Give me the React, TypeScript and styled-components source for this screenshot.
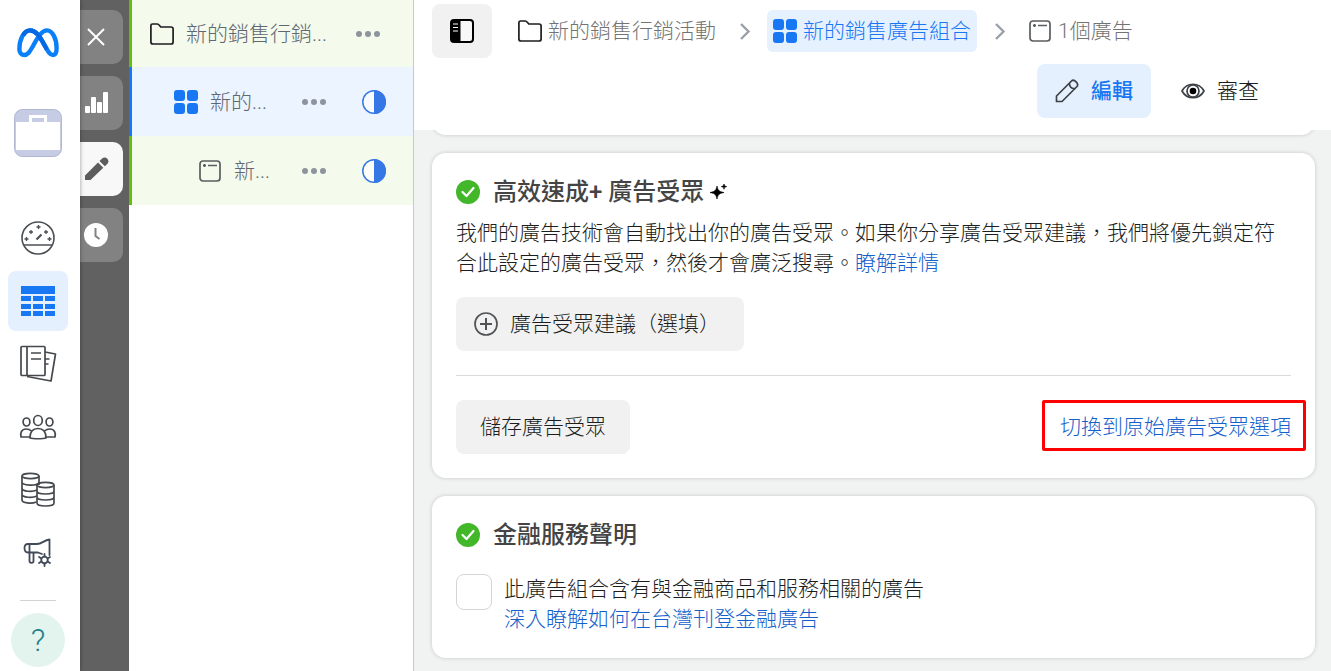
import React from "react";
import styled, { createGlobalStyle, css } from "styled-components";

const GlobalStyle = createGlobalStyle`
  *, *::before, *::after { box-sizing: border-box; }
  body {
    margin: 0;
    background: #f1f3f3;
    color: #1c1e21;
    font-family: Roboto, "Noto Sans CJK TC", sans-serif;
    font-size: 21px;
    font-weight: 300;
    line-height: 30px;
  }
  button { border: 0; padding: 0; background: none; color: inherit; font: inherit; cursor: pointer; }
  a { color: #1461cc; text-decoration: none; }
  svg { display: block; flex: none; }
  h2, p { margin: 0; }
`;

const Page = styled.div`
  display: grid;
  grid-template-columns: 80px 49px 285px minmax(0, 1fr);
  min-height: 100vh;
`;

/* Global navigation rail */
const Rail = styled.nav`
  display: flex;
  flex-direction: column;
  align-items: center;
  padding: 13px 4px 0 0;
  background: #fff;
  box-shadow: 0 0 4px rgba(0, 0, 0, 0.4);
  z-index: 2;
`;
const Brand = styled.a`
  display: grid;
  place-items: center;
  width: 60px;
  height: 60px;
`;
const Account = styled.button`
  margin: 36px 0 51px;
  width: 48px;
  height: 48px;
`;
const RailList = styled.div`
  display: flex;
  flex-direction: column;
  gap: 3px;
`;
const RailButton = styled.button<{ $active?: boolean }>`
  display: grid;
  place-items: center;
  width: 60px;
  height: 60px;
  border-radius: 8px;
  background: ${(p) => (p.$active ? "#e5f0fe" : "transparent")};
`;
const RailRule = styled.hr`
  width: 36px;
  margin: 17px 0 12px;
  border: 0;
  border-top: 1px solid #d0d3d6;
`;
const Help = styled.button`
  width: 54px;
  height: 54px;
  border-radius: 50%;
  background: #e3f4ef;
  color: #23808a;
  font-size: 32px;
`;

/* Dark tool strip */
const Strip = styled.div`
  display: flex;
  flex-direction: column;
  gap: 12px;
  padding: 10px 6px 0 0;
  background: #616161;
`;
const StripButton = styled.button<{ $active?: boolean }>`
  display: flex;
  align-items: center;
  height: 54px;
  padding-left: 4px;
  border-radius: 0 10px 10px 0;
  background: ${(p) => (p.$active ? "#f8f8f8" : "#828282")};
  color: ${(p) => (p.$active ? "#5c5c5c" : "#fff")};
`;

/* Campaign tree */
const Tree = styled.aside`
  background: #fff;
  border-right: 1px solid #c6c9cd;
`;
const TreeRow = styled.div<{ $level: number; $active?: boolean }>`
  display: flex;
  align-items: center;
  height: ${(p) => (p.$level === 0 ? 67 : 69)}px;
  padding: 0 ${(p) => (p.$level === 0 ? 33 : 27)}px 0 ${(p) => 18 + p.$level * 24}px;
  border-left: 3px solid ${(p) => (p.$active ? "#1877f2" : "#63be09")};
  background: ${(p) => (p.$active ? "#ebf4ff" : "#f4faec")};
  color: #606770;
`;
const TreeName = styled.span`
  flex: 1;
  margin-left: 12px;
  white-space: nowrap;
`;
const Status = styled.span`
  margin-left: 36px;
`;

/* Editor */
const Main = styled.main`
  display: flex;
  flex-direction: column;
`;
const Header = styled.header`
  padding: 4px 18px 12px;
  background: #fff;
  z-index: 1;
`;
const HeaderRow = styled.div`
  display: flex;
  align-items: center;
`;
const PanelToggle = styled.button`
  display: grid;
  place-items: center;
  width: 60px;
  height: 54px;
  margin-right: 20px;
  border-radius: 8px;
  background: #f1f1f1;
`;
const Crumbs = styled.nav`
  display: flex;
  align-items: center;
  gap: 10px;
`;
const Crumb = styled.a<{ $active?: boolean }>`
  display: flex;
  align-items: center;
  gap: 6px;
  padding: 6px;
  border-radius: 6px;
  white-space: nowrap;
  color: #737373;
  ${(p) => p.$active && css`
    background: #e5f1ff;
    color: #1877f2;
  `}
`;
const Modes = styled.div`
  display: flex;
  justify-content: flex-end;
  gap: 12px;
  padding: 6px 36px 0 0;
`;
const Mode = styled.button<{ $active?: boolean }>`
  display: flex;
  align-items: center;
  gap: 12px;
  height: 54px;
  padding: 0 18px;
  border-radius: 8px;
  ${(p) => p.$active && css`
    background: #e5f0fe;
    color: #1877f2;
    font-weight: 500;
  `}
`;
const Cards = styled.div`
  display: flex;
  flex-direction: column;
  gap: 18px;
  padding: 0 16px 12px 18px;
`;
const Card = styled.section`
  padding: 23px 24px 24px;
  border-radius: 14px;
  background: #fff;
  box-shadow: 0 0 4px rgba(0, 0, 0, 0.18);
`;
const ScrolledCard = styled(Card)`
  margin-top: -42px;
`;
const CardTitle = styled.h2`
  display: flex;
  align-items: center;
  gap: 13px;
  color: #444;
  font-size: 24px;
  font-weight: 500;
  line-height: 32px;
`;
const TitleText = styled.span`
  display: flex;
  align-items: center;
  gap: 6px;
`;
const Description = styled.p`
  margin: 10px 0 19px;
`;
const GreyButton = styled.button`
  display: inline-flex;
  align-items: center;
  gap: 12px;
  height: 54px;
  padding: 0 24px;
  border-radius: 8px;
  background: #f1f1f1;
`;
const SuggestButton = styled(GreyButton)`
  padding-left: 18px;
`;
const CardFooter = styled.div`
  display: flex;
  align-items: center;
  justify-content: space-between;
  margin-top: 24px;
  padding-top: 24px;
  border-top: 1px solid #d9dadc;
`;
const SwitchLink = styled.button`
  position: relative;
  color: #1461cc;
  &::after {
    content: "";
    position: absolute;
    inset: -12px -15px -9px -18px;
    border: 3px solid #f00;
    border-radius: 2px;
  }
`;
const CheckRow = styled.div`
  display: flex;
  gap: 12px;
  margin-top: 23px;
`;
const CheckText = styled.div`
  display: flex;
  flex-direction: column;
  align-items: flex-start;
`;
const Checkbox = styled.input`
  appearance: none;
  flex: none;
  width: 36px;
  height: 36px;
  margin: 0;
  border: 1px solid #d3d5d8;
  border-radius: 8px;
  background: #fff;
`;

const MetaLogo = () => (
  <svg width="42" height="30" viewBox="0 0 42 30" fill="none" strokeWidth="4.4">
    <path stroke="#0a80f8" d="M2.4 21C2.4 12 6.5 2.4 13 2.4C20 2.4 24 11 28 18C31 23.5 33 27 36 27C38.5 27 39.6 24.5 39.6 20C39.6 11 35.5 2.4 30 2.4C25 2.4 21.500 8 16 18C12.500 24 11 27 7 27C4 27 2.400 24.500 2.400 21Z" />
    <path stroke="#0567e4" d="M6 7.500C8 4 10.500 2.400 13 2.400C20 2.400 24 11 28 18C28.700 19.300 29.400 20.500 30 21.500" />
  </svg>
);
const AccountIcon = () => (
  <svg width="48" height="48" viewBox="0 0 48 48">
    <rect x=".5" y=".5" width="47" height="47" rx="8" fill="#c5cce4" stroke="#b0b7d3" />
    <path d="M15 13V6h18v7h-3V9H18v4z" fill="#fff" />
    <rect x="2" y="13" width="44" height="28" fill="#fff" />
  </svg>
);
const GaugeIcon = () => (
  <svg width="36" height="36" viewBox="0 0 36 36" fill="none" stroke="#4b4f54" strokeWidth="1.6">
    <circle cx="18" cy="18" r="16" />
    <path d="M4 25h28" strokeWidth="1.500" />
    <path d="M16.500 19.500L21.500 14.500" strokeWidth="2.200" />
    <path d="M18.500 5v4M16.500 7h4M11 10v4M9 12h4M26 10v4M24 12h4M6.500 17v4M4.500 19h4M29.500 17v4M27.500 19h4" strokeWidth="1.300" />
  </svg>
);
const TableIcon = () => (
  <svg width="34" height="32" viewBox="0 0 34 32" fill="#1877f2">
    <rect width="34" height="8" y="1" />
    {[11, 19, 26].map((y) => [0, 12, 24].map((x) => <rect key={`${x}-${y}`} x={x} y={y} width="10" height="5" />))}
  </svg>
);
const PagesIcon = () => (
  <svg width="38" height="38" viewBox="0 0 38 38" fill="none" stroke="#45494e" strokeWidth="1.700" strokeLinejoin="round">
    <rect x="2" y="1.500" width="24" height="29" rx="1" />
    <path d="M8 1.500v29M12 8h10M12 14h10M26 7l10.500 2-4.500 27-24-4.500M26 14h4.500M26 19h3.500" />
  </svg>
);
const PeopleIcon = () => (
  <svg width="38" height="26" viewBox="0 0 38 26" fill="none" stroke="#45494e" strokeWidth="1.700" strokeLinejoin="round">
    <ellipse cx="19" cy="6.500" rx="4.300" ry="5" />
    <ellipse cx="7.500" cy="8" rx="3.400" ry="4" />
    <ellipse cx="30.500" cy="8" rx="3.400" ry="4" />
    <path d="M11 24c0-6 2-9.500 8-9.500s8 3.500 8 9.500c-3 1-13 1-16 0zM10.500 23H2c-1-4 .5-8 5-8 2.500 0 4 .5 5.500 2M27.500 23H36c1-4-.5-8-5-8-2.500 0-4 .5-5.500 2" />
  </svg>
);
const CoinsIcon = () => (
  <svg width="36" height="36" viewBox="0 0 36 36" fill="none" stroke="#45494e" strokeWidth="1.700">
    <ellipse cx="10.500" cy="4" rx="8.500" ry="2.600" />
    <path d="M2 4v24c0 3 10 4 14 2M19 4v9M2 10c0 4 15 4 17 1M2 16c0 4 11 4 15 2M2 22c0 4 11 4 15 2" />
    <ellipse cx="25.500" cy="13" rx="8.500" ry="2.600" />
    <path d="M17 13v18c0 4 17 4 17 0V13M17 19c0 4 17 4 17 0M17 25c0 4 17 4 17 0" />
  </svg>
);
const MegaphoneIcon = () => (
  <svg width="30" height="30" viewBox="0 0 30 30" fill="none" stroke="#414a58" strokeWidth="1.800" strokeLinejoin="round" strokeLinecap="round">
    <path d="M6.500 6H5C2.500 6 1.500 7.500 1.500 10s1 4.500 3.500 4.500h1.500zM6.500 6H14c5 0 7-4 12.500-4.500V17M6.500 14.500H15l4 1.500M6.500 14.500V23c0 2.500 4 2.500 4 0v-8.500" />
    <circle cx="21.500" cy="22" r="3.300" />
    <path d="M21.500 16v2.500M21.500 25.500V28M16 19l2.500 1.500M24.500 23.500L27 25M27 19l-2.500 1.500M18.500 23.500L16 25" />
  </svg>
);
const CloseIcon = () => (
  <svg width="24" height="24" viewBox="0 0 24 24" stroke="currentColor" strokeWidth="2">
    <path d="M4 4l16 16M20 4L4 20" />
  </svg>
);
const BarsIcon = () => (
  <svg width="26" height="26" viewBox="0 0 26 26" fill="currentColor">
    <rect x="1" y="16" width="5" height="7" rx="1" />
    <rect x="7" y="7" width="5" height="16" rx="1" />
    <rect x="13" y="12" width="5" height="11" rx="1" />
    <rect x="19" y="2" width="5" height="21" rx="1" />
  </svg>
);
const PencilSolid = () => (
  <svg width="26" height="26" viewBox="0 0 26 26" fill="currentColor">
    <path d="M1 24v-4.500L14 6.500l5.300 5.300L6.500 24zM15.500 5l2.600-2.500c3.500-3.200 8.500 1.800 5.400 5.200L20.800 10.300z" />
  </svg>
);
const ClockIcon = () => (
  <svg width="24" height="24" viewBox="0 0 24 24">
    <circle cx="12" cy="12" r="12" fill="#fff" />
    <path d="M11.500 5v8l4 3" fill="none" stroke="#828282" strokeWidth="2" />
  </svg>
);
const FolderIcon = () => (
  <svg width="24" height="24" viewBox="0 0 24 24" fill="none" stroke="#1c1e21" strokeWidth="1.700" strokeLinejoin="round">
    <path d="M.9 3.500C.9 2.500 1.500 2 2.500 2h4.800c1 0 1.300.3 2 1.200L10.800 5H21c1.500 0 2.100.7 2.100 2v13c0 1.500-.6 2-2 2H3c-1.500 0-2.100-.6-2.100-2z" />
  </svg>
);
const SetIcon = () => (
  <svg width="24" height="24" viewBox="0 0 24 24" fill="#1877f2">
    {[0, 13].map((y) => [0, 13].map((x) => <rect key={`${x}-${y}`} x={x} y={y} width="11" height="11" rx="3" />))}
  </svg>
);
const AdIcon = () => (
  <svg width="24" height="24" viewBox="0 0 24 24" fill="none" stroke="#5a5d5f" strokeWidth="1.700">
    <rect x="2" y="2" width="20" height="20" rx="3" />
    <path d="M5 6.500h3M6.500 5v3M10 6.500h9" />
  </svg>
);
const DotsIcon = () => (
  <svg width="24" height="8" viewBox="0 0 24 8" fill="#8d949e">
    {[3, 12, 21].map((x) => <circle key={x} cx={x} cy="4" r="3" />)}
  </svg>
);
const HalfIcon = () => (
  <svg width="24" height="24" viewBox="0 0 24 24">
    <circle cx="12" cy="12" r="11.200" fill="#fff" fillOpacity=".6" stroke="#3578e5" strokeWidth="1.500" />
    <path d="M12 0a12 12 0 0 1 0 24z" fill="#3578e5" />
  </svg>
);
const PanelIcon = () => (
  <svg width="24" height="24" viewBox="0 0 24 24">
    <rect x="1" y="1" width="22" height="22" rx="3" fill="#f8f8f8" stroke="#000" strokeWidth="2" />
    <path d="M3 1h7.500v22H3a2 2 0 0 1-2-2V3a2 2 0 0 1 2-2z" />
    <path d="M3 5h5M3 8.500h5M3 12h5" stroke="#fff" strokeWidth="1.200" />
  </svg>
);
const ChevronIcon = () => (
  <svg width="25" height="24" viewBox="0 0 25 24" fill="none" stroke="#9aa0a9" strokeWidth="2.400">
    <path d="M9 5l7.500 7.500L9 20" />
  </svg>
);
const PencilOutline = () => (
  <svg width="24" height="24" viewBox="0 0 24 24" fill="none" stroke="#3d4248" strokeWidth="1.700" strokeLinejoin="round">
    <path d="M1.500 22.500v-5.500L16.500 2c2.500-2.500 8 3 5.500 5.500L7 22.500zM14.500 4.500c0 3.500 2 5.200 5 5" />
  </svg>
);
const EyeIcon = () => (
  <svg width="24" height="24" viewBox="1 0 24 24" fill="none" stroke="#3d4248" strokeWidth="1.700">
    <path d="M2 12C7 3 19 3 24 12C19 21 7 21 2 12z" />
    <circle cx="13" cy="12" r="6" />
    <circle cx="13" cy="12" r="3.300" fill="#000" stroke="none" />
  </svg>
);
const CheckIcon = () => (
  <svg width="24" height="24" viewBox="0 0 24 24" fill="none">
    <circle cx="12" cy="12" r="12" fill="#42b72a" />
    <path d="M6.500 12l4 4L17.500 8" stroke="#fff" strokeWidth="2.200" strokeLinecap="round" strokeLinejoin="round" />
  </svg>
);
const SparkleIcon = () => (
  <svg width="18" height="18" viewBox="0 0 18 18">
    <path d="M7 3c1 4.500 2 5.500 7 6.500-5 1-6 2-7 6.500-1-4.500-2-5.500-7-6.500C5 8.500 6 7.500 7 3zM14 1c.5 1.800.8 2.100 2.700 2.600-1.900.5-2.200.9-2.700 2.700-.5-1.800-.8-2.200-2.700-2.700C13.200 3.100 13.500 2.800 14 1z" stroke="#000" strokeWidth=".6" />
  </svg>
);
const PlusCircleIcon = () => (
  <svg width="24" height="24" viewBox="0 0 24 24" fill="none" stroke="#505356" strokeWidth="1.700">
    <circle cx="12" cy="12" r="11" />
    <path d="M12 6v12M6 12h12" strokeWidth="2" />
  </svg>
);

const railItems = [
  { label: "帳號總覽", Icon: GaugeIcon },
  { label: "行銷活動", Icon: TableIcon, active: true },
  { label: "廣告報告", Icon: PagesIcon },
  { label: "廣告受眾", Icon: PeopleIcon },
  { label: "帳單", Icon: CoinsIcon },
  { label: "廣告設定", Icon: MegaphoneIcon },
];
const stripItems = [
  { label: "關閉", Icon: CloseIcon },
  { label: "圖表", Icon: BarsIcon },
  { label: "編輯", Icon: PencilSolid, active: true },
  { label: "歷史紀錄", Icon: ClockIcon },
];
const treeItems = [
  { name: "新的銷售行銷...", Icon: FolderIcon },
  { name: "新的...", Icon: SetIcon, active: true },
  { name: "新...", Icon: AdIcon },
];

export default function App() {
  return (
    <>
      <GlobalStyle />
      <Page lang="zh-Hant">
        <Rail>
          <Brand href="#" aria-label="Meta"><MetaLogo /></Brand>
          <Account aria-label="帳號"><AccountIcon /></Account>
          <RailList>
            {railItems.map(({ label, Icon, active }) => (
              <RailButton key={label} aria-label={label} $active={active}><Icon /></RailButton>
            ))}
          </RailList>
          <RailRule />
          <Help>?</Help>
        </Rail>

        <Strip>
          {stripItems.map(({ label, Icon, active }) => (
            <StripButton key={label} aria-label={label} $active={active}><Icon /></StripButton>
          ))}
        </Strip>

        <Tree>
          {treeItems.map(({ name, Icon, active }, level) => (
            <TreeRow key={name} $level={level} $active={active}>
              <Icon />
              <TreeName>{name}</TreeName>
              <button aria-label="更多"><DotsIcon /></button>
              {level > 0 && <Status><HalfIcon /></Status>}
            </TreeRow>
          ))}
        </Tree>

        <Main>
          <Header>
            <HeaderRow>
              <PanelToggle aria-label="切換面板"><PanelIcon /></PanelToggle>
              <Crumbs>
                <Crumb href="#"><FolderIcon />新的銷售行銷活動</Crumb>
                <ChevronIcon />
                <Crumb href="#" $active><SetIcon />新的銷售廣告組合</Crumb>
                <ChevronIcon />
                <Crumb href="#"><AdIcon />1個廣告</Crumb>
              </Crumbs>
            </HeaderRow>
            <Modes>
              <Mode $active><PencilOutline />編輯</Mode>
              <Mode><EyeIcon />審查</Mode>
            </Modes>
          </Header>

          <Cards>
            <ScrolledCard />
            <Card>
              <CardTitle>
                <CheckIcon />
                <TitleText>高效速成+ 廣告受眾<SparkleIcon /></TitleText>
              </CardTitle>
              <Description>
                我們的廣告技術會自動找出你的廣告受眾。如果你分享廣告受眾建議，我們將優先鎖定符合此設定的廣告受眾，然後才會廣泛搜尋。<a href="#">瞭解詳情</a>
              </Description>
              <SuggestButton><PlusCircleIcon />廣告受眾建議（選填）</SuggestButton>
              <CardFooter>
                <GreyButton>儲存廣告受眾</GreyButton>
                <SwitchLink>切換到原始廣告受眾選項</SwitchLink>
              </CardFooter>
            </Card>
            <Card>
              <CardTitle><CheckIcon />金融服務聲明</CardTitle>
              <CheckRow>
                <Checkbox type="checkbox" id="financial" />
                <CheckText>
                  <label htmlFor="financial">此廣告組合含有與金融商品和服務相關的廣告</label>
                  <a href="#">深入瞭解如何在台灣刊登金融廣告</a>
                </CheckText>
              </CheckRow>
            </Card>
          </Cards>
        </Main>
      </Page>
    </>
  );
}
